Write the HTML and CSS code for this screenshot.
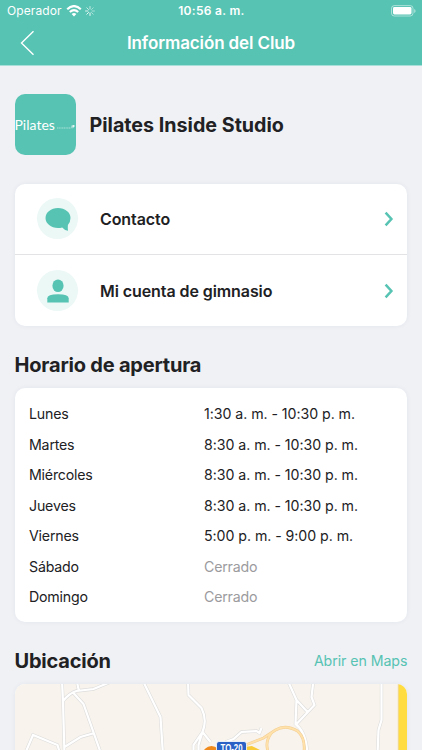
FILE: index.html
```html
<!DOCTYPE html>
<html lang="es">
<head>
<meta charset="utf-8">
<title>Información del Club</title>
<link rel="stylesheet" href="styles.css">
</head>
<body>
<header class="header">
  <div class="status">
    <div class="carrier"><span>Operador</span>
      <svg class="wifi" width="16" height="12" viewBox="0 0 16 12" fill="none" stroke="#fff" stroke-width="2.2"><path d="M1.2 4.2Q8-2 14.8 4.2M3.8 7Q8 3.3 12.2 7"/><path d="M8 11.6 5.6 9.1Q8 7 10.4 9.1Z" fill="#fff" stroke="none"/></svg>
      <svg class="spinner" width="10" height="10" viewBox="0 0 10 10" stroke="#fff" stroke-width="1" stroke-linecap="round"><path d="M5 .5V3" opacity=".65"/><path d="M8.2 1.8 6.5 3.5" opacity=".45"/><path d="M9.5 5H7" opacity=".45"/><path d="M8.2 8.2 6.5 6.5" opacity=".5"/><path d="M5 9.5V7" opacity=".9"/><path d="M1.8 8.2 3.5 6.5" opacity=".9"/><path d="M.5 5H3" opacity=".8"/><path d="M1.8 1.8 3.5 3.5" opacity=".7"/></svg>
    </div>
    <span class="clock">10:56 a. m.</span>
    <svg class="battery" width="25" height="12" viewBox="0 0 25 12"><rect x=".5" y=".6" width="21.5" height="10.4" rx="2.8" fill="none" stroke="#fff" stroke-opacity=".5"/><rect x="2" y="2" width="18.5" height="7.5" rx="1.4" fill="#fff"/><path d="M23.3 4v4q1.2-.6 1.2-2t-1.2-2" fill="#fff" opacity=".6"/></svg>
  </div>
  <div class="nav">
    <svg class="back" width="15" height="26" viewBox="0 0 15 26" fill="none" stroke="#fff" stroke-width="1.4"><path d="M13.5 1.3 1.5 13l12 11.8"/></svg>
    <h1 class="nav-title">Información del Club</h1>
  </div>
</header>
<main class="content">
  <section class="club">
    <div class="logo"><span class="logo-word">Pilates</span><svg class="logo-tail" width="20" height="10" viewBox="0 0 20 10" fill="none" stroke="#fff"><path d="M1 8h14" stroke-width="1.200" stroke-dasharray="1.200 .5" opacity=".5"/><path d="M16 8.300V5.500M16 6h3M17.500 5v2.500" stroke-width=".9" opacity=".8"/></svg></div>
    <h2 class="club-name">Pilates Inside Studio</h2>
  </section>
  <nav class="card menu">
    <a class="row"><span class="disc"><svg width="26" height="24" viewBox="0 0 26 24" fill="#57c3b3"><path d="M13 1C6 1 .5 5.4.5 11S6 21 13 21q2.200 0 4.200-.5 2 2.600 5.800 3.200-.4-2.300-.1-5.700Q25.500 15 25.500 11C25.500 5.400 20 1 13 1Z"/></svg></span><span class="label">Contacto</span><svg class="chev" width="10" height="16" viewBox="0 0 10 16"><path d="m1.600 1.700 5.800 6.300-5.800 6.300" fill="none" stroke="#57c3b3" stroke-width="2.500"/></svg></a>
    <a class="row"><span class="disc"><svg width="22" height="24" viewBox="0 0 22 24" fill="#57c3b3"><ellipse cx="11" cy="6.800" rx="5.600" ry="6.300"/><path d="M.3 23.500v-4.300q0-4 10.700-4t10.700 4v4.300Z"/></svg></span><span class="label">Mi cuenta de gimnasio</span><svg class="chev" width="10" height="16" viewBox="0 0 10 16"><path d="m1.600 1.700 5.800 6.300-5.800 6.300" fill="none" stroke="#57c3b3" stroke-width="2.500"/></svg></a>
  </nav>
  <h2 class="section-title hours-title">Horario de apertura</h2>
  <dl class="card hours">
    <dt>Lunes</dt><dd>1:30 a. m. - 10:30 p. m.</dd>
    <dt>Martes</dt><dd>8:30 a. m. - 10:30 p. m.</dd>
    <dt>Miércoles</dt><dd>8:30 a. m. - 10:30 p. m.</dd>
    <dt>Jueves</dt><dd>8:30 a. m. - 10:30 p. m.</dd>
    <dt>Viernes</dt><dd>5:00 p. m. - 9:00 p. m.</dd>
    <dt>Sábado</dt><dd class="closed">Cerrado</dd>
    <dt>Domingo</dt><dd class="closed">Cerrado</dd>
  </dl>
  <div class="location-head"><h2 class="section-title">Ubicación</h2><a class="maps-link">Abrir en Maps</a></div>
  <div class="card map">
    <svg width="393" height="80" viewBox="14.5 684 393 80">
      <defs><g id="roads"><path d="M61.5 680 62.5 702 64 755M62.5 701Q69 693 76 691L93 689 110 682M76 680 78.5 691M73 693 83 704 101 755M64 747 80 737 94 733M24 755 32.5 735 57 745 60 755M142 680 160 717 162.5 755M187.5 680 188 695 201 708Q207 720 202 732L193 745V755M202 732 210 742M202 732 198 745V755M287 680 296 700 295 724Q306 732 307 755M313 680 311 697 314 705 296 724M296 700 307 712M381 680V720L378 730 377 755M225 742 233 739 241 732 256 731 259 733 261 728"/></g></defs>
      <path d="M14 684h394v80H14Z" fill="#f8f4ed"/>
      <use href="#roads" fill="none" stroke="#dedddd" stroke-width="3.4"/>
      <use href="#roads" fill="none" stroke="#fff" stroke-width="2.2"/>
      <path d="M245 745 263 738 275 730Q285 724 297 731 306 739 303 755M271 733Q263 743 269 755" fill="none" stroke="#f2cc92" stroke-width="2.8"/>
      <path d="M245 745 263 738 275 730Q285 724 297 731 306 739 303 755M271 733Q263 743 269 755" fill="none" stroke="#ffe1aa" stroke-width="1.8"/>
      <path d="M398 684h10v80H398Z" fill="#ffdc3f"/><path d="M397.8 684v80" stroke="#eccb73" stroke-width=".7"/>
      <path d="M244 749 251 748 259 752" fill="none" stroke="#f9cb39" stroke-width="4"/>
      <circle cx="211" cy="755" r="9" fill="#f08a1c"/>
      <rect x="216" y="741.5" width="30" height="15" rx="2.5" fill="#2860c5" stroke="#fff" stroke-width=".8"/>
      <text x="231" y="752" class="shield" textLength="22" lengthAdjust="spacingAndGlyphs">TO-20</text>
    </svg>
  </div>
</main>
</body>
</html>
```
FILE: styles.css
```css
* { box-sizing: border-box; }
body { margin: 0; height: 750px; overflow: hidden; background: #eff1f5; color: #212124; font-family: Inter, "Liberation Sans", sans-serif; }
h1, h2, dl, dd { margin: 0; }
svg { display: block; flex: none; }
.header { height: 66px; background: #57c3b3; border-bottom: 1px solid #a8dfd9; color: #fff; }
.status { display: grid; grid-template-columns: 1fr auto 1fr; align-items: center; height: 21px; padding: 0 6px 0 7px; font-size: 12px; }
.carrier { display: flex; align-items: center; letter-spacing: .1px; }
.wifi { margin-left: 4px; }
.spinner { margin-left: 3px; }
.clock { font-weight: 600; letter-spacing: .3px; }
.battery { justify-self: end; }
.nav { display: grid; grid-template-columns: 60px 1fr 60px; align-items: center; height: 44px; }
.back { margin-left: 20px; }
.nav-title { text-align: center; font-size: 17px; font-weight: 600; letter-spacing: -.12px; }
.content { padding: 28px 14.6px 0 14.5px; }
.club { display: flex; align-items: center; gap: 14px; height: 61px; }
.logo { display: flex; align-items: center; width: 61px; height: 61px; border-radius: 10px; background: #57c3b3; overflow: hidden; color: #fff; }
.logo-word { font: 14px/20px Lato, sans-serif; width: 41px; letter-spacing: 0; flex: none; }
.club-name { font-size: 19.7px; font-weight: 700; letter-spacing: 0; }
.card { background: #fff; border-radius: 10px; box-shadow: 0 0 5px rgba(40, 50, 80, .06); }
.menu { margin-top: 28.5px; height: 142.5px; }
.row { display: flex; align-items: center; height: 70.8px; padding: 0 13px 0 22.5px; }
.row + .row { border-top: 1px solid #e3e3e6; height: 71.7px; }
.disc { display: flex; align-items: center; justify-content: center; width: 41px; height: 41px; margin-right: 22px; border-radius: 50%; background: #ebf8f6; }
.label { flex: 1; font-size: 16px; font-weight: 600; letter-spacing: -.08px; }
.section-title { font-size: 20px; line-height: 26px; font-weight: 700; letter-spacing: -.2px; }
.hours-title { margin: 26px 0 10.4px; }
.hours { display: grid; grid-template-columns: 175px 1fr; grid-auto-rows: 30.5px; align-items: center; height: 234px; padding: 10px 14.5px; font-size: 14.2px; letter-spacing: -.06px; }
.hours dt, .closed { letter-spacing: -.2px; }
.closed { color: #9b9b9e; }
.location-head { display: flex; align-items: center; justify-content: space-between; margin: 25.2px 0 10.4px; }
.maps-link { color: #57c3b3; font-size: 14.2px; letter-spacing: -.07px; }
.map { height: 80px; overflow: hidden; }
.shield { font: bold 10px "Liberation Sans", sans-serif; fill: #fff; text-anchor: middle; }
```
